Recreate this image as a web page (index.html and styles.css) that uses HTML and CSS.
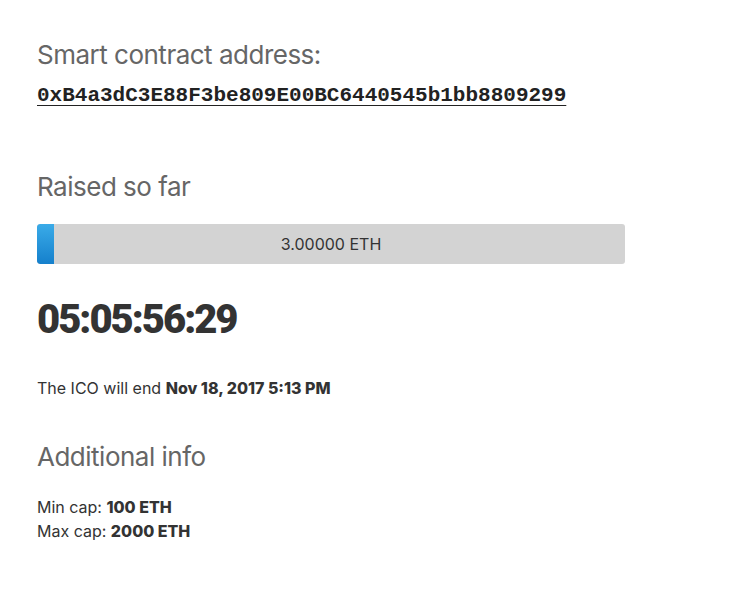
FILE: index.html
```html
<!DOCTYPE html>
<html>
<head>
<meta charset="utf-8">
<link rel="stylesheet" href="styles.css">
</head>
<body>
<main class="page">
  <section class="block address-block">
    <h2 class="heading">Smart contract address:</h2>
    <a class="address" href="#">0xB4a3dC3E88F3be809E00BC6440545b1bb8809299</a>
  </section>
  <section class="block raised-block">
    <h2 class="heading">Raised so far</h2>
    <div class="bar">
      <div class="bar-fill" style="width:17px"></div>
      <span class="bar-label">3.00000 ETH</span>
    </div>
  </section>
  <div class="countdown">05:05:56:29</div>
  <p class="end">The ICO will end <strong>Nov 18, 2017 5:13 PM</strong></p>
  <section class="block info-block">
    <h2 class="heading">Additional info</h2>
    <p class="cap">Min cap: <strong>100 ETH</strong></p>
    <p class="cap">Max cap: <strong>2000 ETH</strong></p>
  </section>
</main>
</body>
</html>
```

FILE: styles.css
```css
* { box-sizing: border-box; }
html, body { margin: 0; padding: 0; background: #fff; }
body {
  font-family: Inter, "Open Sans", sans-serif;
  color: #333;
}
.page {
  padding: 38px 0 0 37px;
  width: 624px;
}
.heading {
  margin: 0;
  font-weight: 400;
  font-size: 26px;
  line-height: 34px;
  color: #666;
  letter-spacing: -0.5px;
}
.address {
  display: inline-block;
  margin-top: 12px;
  font-family: "Courier New", "Liberation Mono", monospace;
  font-weight: 700;
  font-size: 21px;
  line-height: 24px;
  color: #222;
  text-decoration: underline;
  text-underline-offset: 4px;
  text-decoration-thickness: 1px;
}
.raised-block { margin-top: 62px; }
.bar {
  position: relative;
  margin-top: 20px;
  height: 40px;
  width: 588px;
  background: #d3d3d3;
  border-radius: 3px;
  display: flex;
  align-items: center;
  justify-content: center;
  overflow: hidden;
}
.bar-fill {
  position: absolute;
  left: 0; top: 0; bottom: 0;
  background: linear-gradient(#3aabe8, #1580cc);
  border-radius: 3px 0 0 3px;
}
.bar-label {
  position: relative;
  font-size: 16px;
  color: #333;
}
.countdown {
  margin-top: 34px;
  font-family: Roboto, Inter, sans-serif;
  font-size: 40px;
  font-weight: 900;
  color: #333;
  letter-spacing: -2px;
  line-height: 44px;
}
.end {
  margin: 36px 0 0;
  font-size: 16px;
  line-height: 20px;
}
.end strong, .cap strong { font-weight: 800; }
.info-block { margin-top: 42px; }
.cap {
  margin: 0;
  font-size: 16px;
  line-height: 24px;
}
.info-block .heading { margin-bottom: 21px; }
```
